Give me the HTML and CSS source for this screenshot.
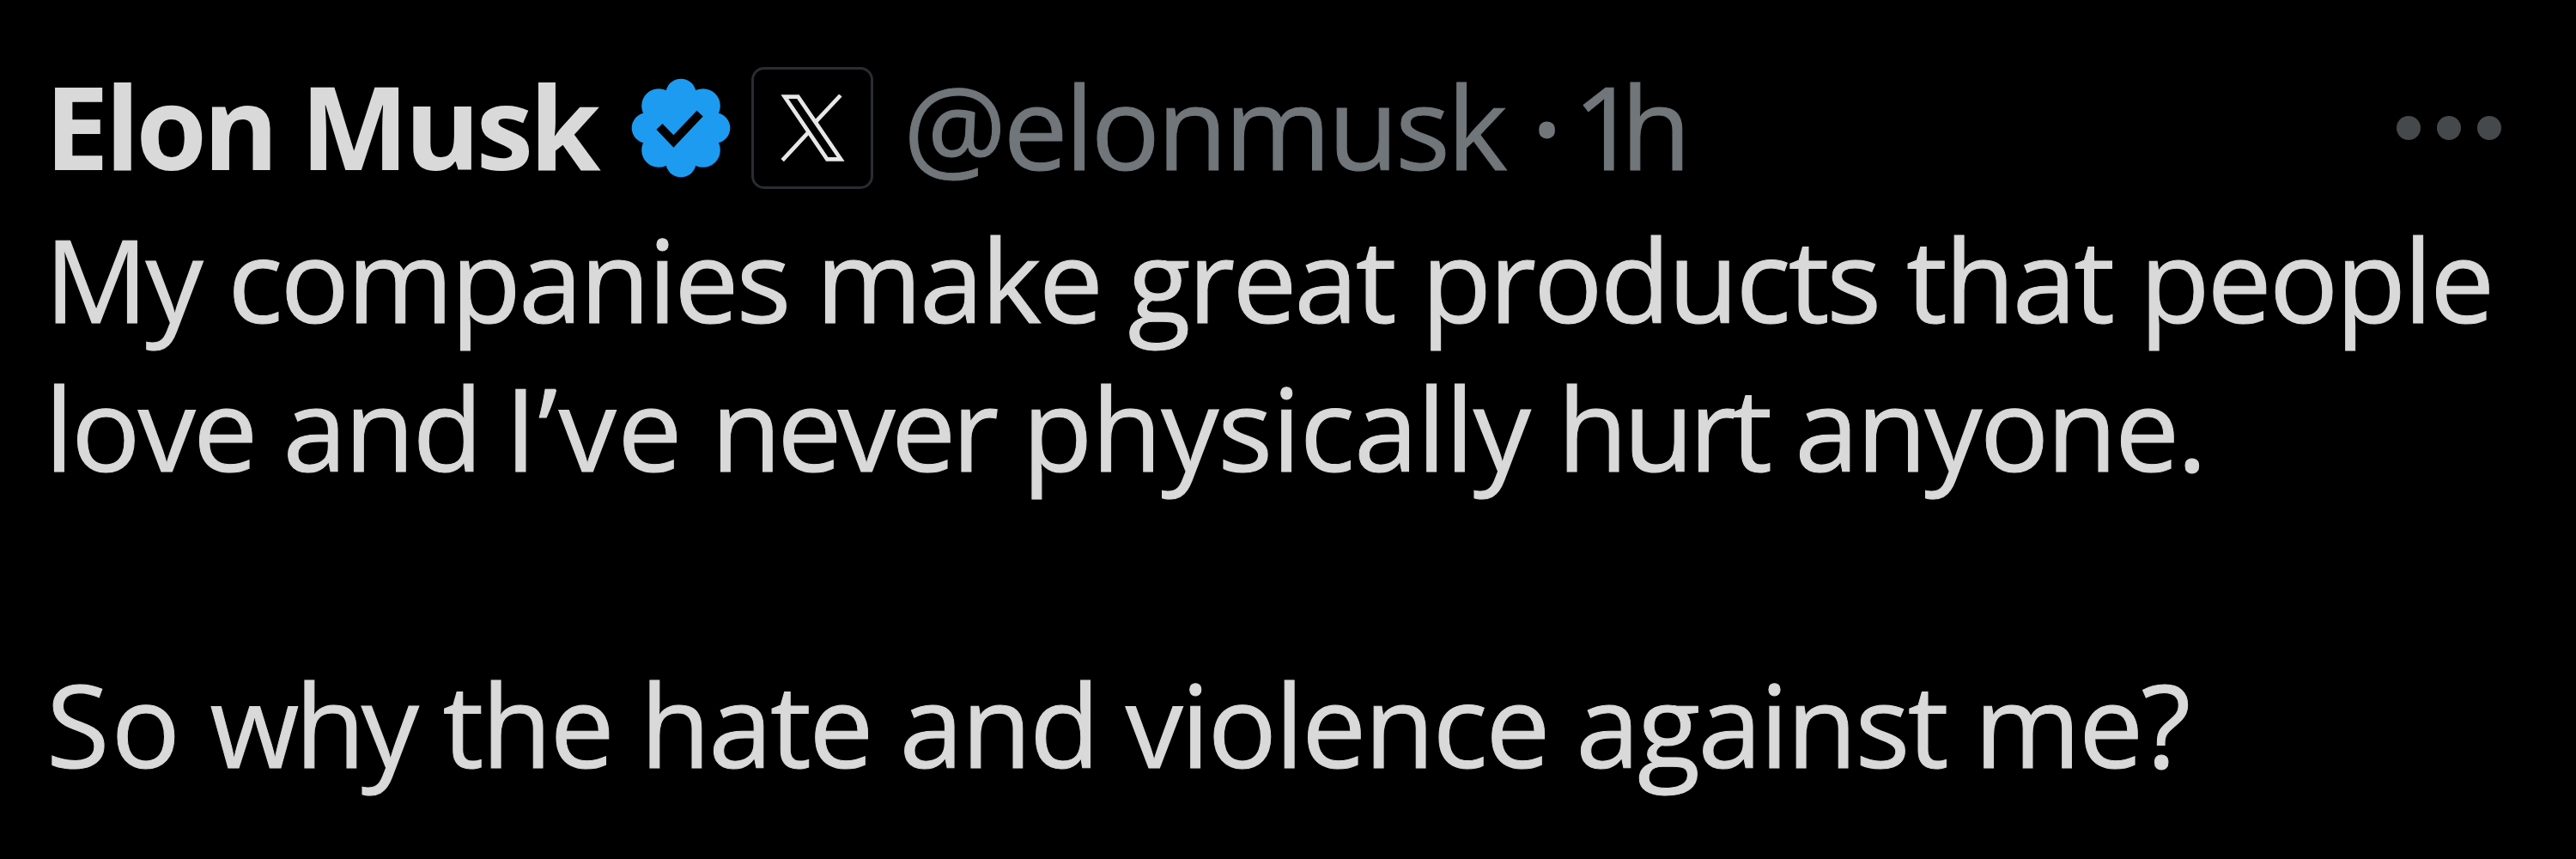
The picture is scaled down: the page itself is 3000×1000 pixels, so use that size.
FILE: index.html
```
<!DOCTYPE html>
<html lang="en">

<head>
    <meta charset="UTF-8">
    <meta name="viewport" content="width=device-width, initial-scale=1.0">
    <title>Elon Musk on X</title>
    <link rel="stylesheet" href="styles.css">
</head>

<body>

    <article class="post">
        <header class="post-header">
            <span class="name">Elon Musk</span>

            <svg class="verified" viewBox="0 0 352 352">
                <g fill="#1d9bf0">
                    <circle cx="176" cy="176" r="138" />
                    <circle cx="176" cy="56" r="54" />
                    <circle cx="296" cy="176" r="54" />
                    <circle cx="176" cy="296" r="54" />
                    <circle cx="56" cy="176" r="54" />
                    <circle cx="98" cy="98" r="61" />
                    <circle cx="254" cy="98" r="61" />
                    <circle cx="254" cy="254" r="61" />
                    <circle cx="98" cy="254" r="61" />
                </g>
                <path d="M100 171l50 52 93-98" fill="none" stroke="#000" stroke-width="30" />
            </svg>

            <span class="affiliate">
                <svg viewBox="0 0 225 235" fill="none" stroke="#e7e7e7" stroke-width="14">
                    <path d="M14 8h47l150 219h-48z" />
                    <path d="M210 3L122 97M6 231l91-98" />
                </svg>
            </span>

            <span class="handle">@elonmusk</span>
            <span class="dot">·</span>
            <span class="time">1h</span>

            <span class="more"><i></i><i></i><i></i></span>
        </header>

        <div class="post-text">
            <p class="line-1">My companies make great products that people</p>
            <p class="line-2">love and <span class="ive">I’ve</span> <span class="never">never</span> <span class="physically">physically</span> <span class="hurt">hurt</span> anyone.</p>
            <p class="line-3"><span class="so">So</span> <span class="why">why</span> the hate and violence against me?</p>
        </div>
    </article>

</body>

</html>
```
FILE: styles.css
```
body {
    margin: 0;
    background-color: #000;
    font-family: "Open Sans", sans-serif;
    font-size: 134px;
    line-height: 172.7px;
    color: #d9d9d9;
    overflow: hidden;
}

.post {
    box-sizing: border-box;
    width: 3000px;
    height: 1000px;
    padding: 60px 87px 0 52px;
}

.post-header {
    display: flex;
    align-items: center;
    height: 178px;
    white-space: nowrap;
}

.post-header > span:not(.affiliate):not(.more) {
    height: 178px;
}

.name {
    width: 683px;
    font-weight: 700;
    letter-spacing: -4.8px;
}

.verified {
    width: 116px;
    height: 116px;
}

.affiliate {
    box-sizing: border-box;
    display: flex;
    align-items: center;
    justify-content: center;
    width: 142px;
    height: 142px;
    margin-left: 24px;
    border: 3px solid #2a2d30;
    border-radius: 15px;
}

.affiliate svg {
    width: 75px;
    height: 78px;
}

.handle {
    margin-left: 35px;
    width: 732px;
    color: #71767b;
    letter-spacing: -3.6px;
    -webkit-text-stroke: 1px #71767b;
}

.dot {
    width: 48px;
    color: #71767b;
    -webkit-text-stroke: 3px #71767b;
}

.time {
    color: #71767b;
    letter-spacing: -21px;
    -webkit-text-stroke: 1px #71767b;
}

/* three dots menu */
.more {
    display: flex;
    gap: 19px;
    margin-left: auto;
}

.more i {
    width: 28px;
    height: 28px;
    border-radius: 50%;
    background-color: #46494c;
}

.post-text p {
    margin: 0;
    white-space: nowrap;
    -webkit-text-stroke: 1px #d9d9d9;
}

.line-1 {
    letter-spacing: -3.05px;
}

.line-2 {
    letter-spacing: -2.8px;
}

.post-text .line-3 {
    margin-top: 173px;
    margin-left: 2px;
    letter-spacing: -2.5px;
}

.ive {
    margin-left: -4px;
    letter-spacing: 1.5px;
}

.never {
    letter-spacing: -4.8px;
}

.physically {
    letter-spacing: -1.1px;
}

.hurt {
    letter-spacing: -5.6px;
}

.so {
    letter-spacing: 2px;
}

.why {
    letter-spacing: -4.8px;
}
```
